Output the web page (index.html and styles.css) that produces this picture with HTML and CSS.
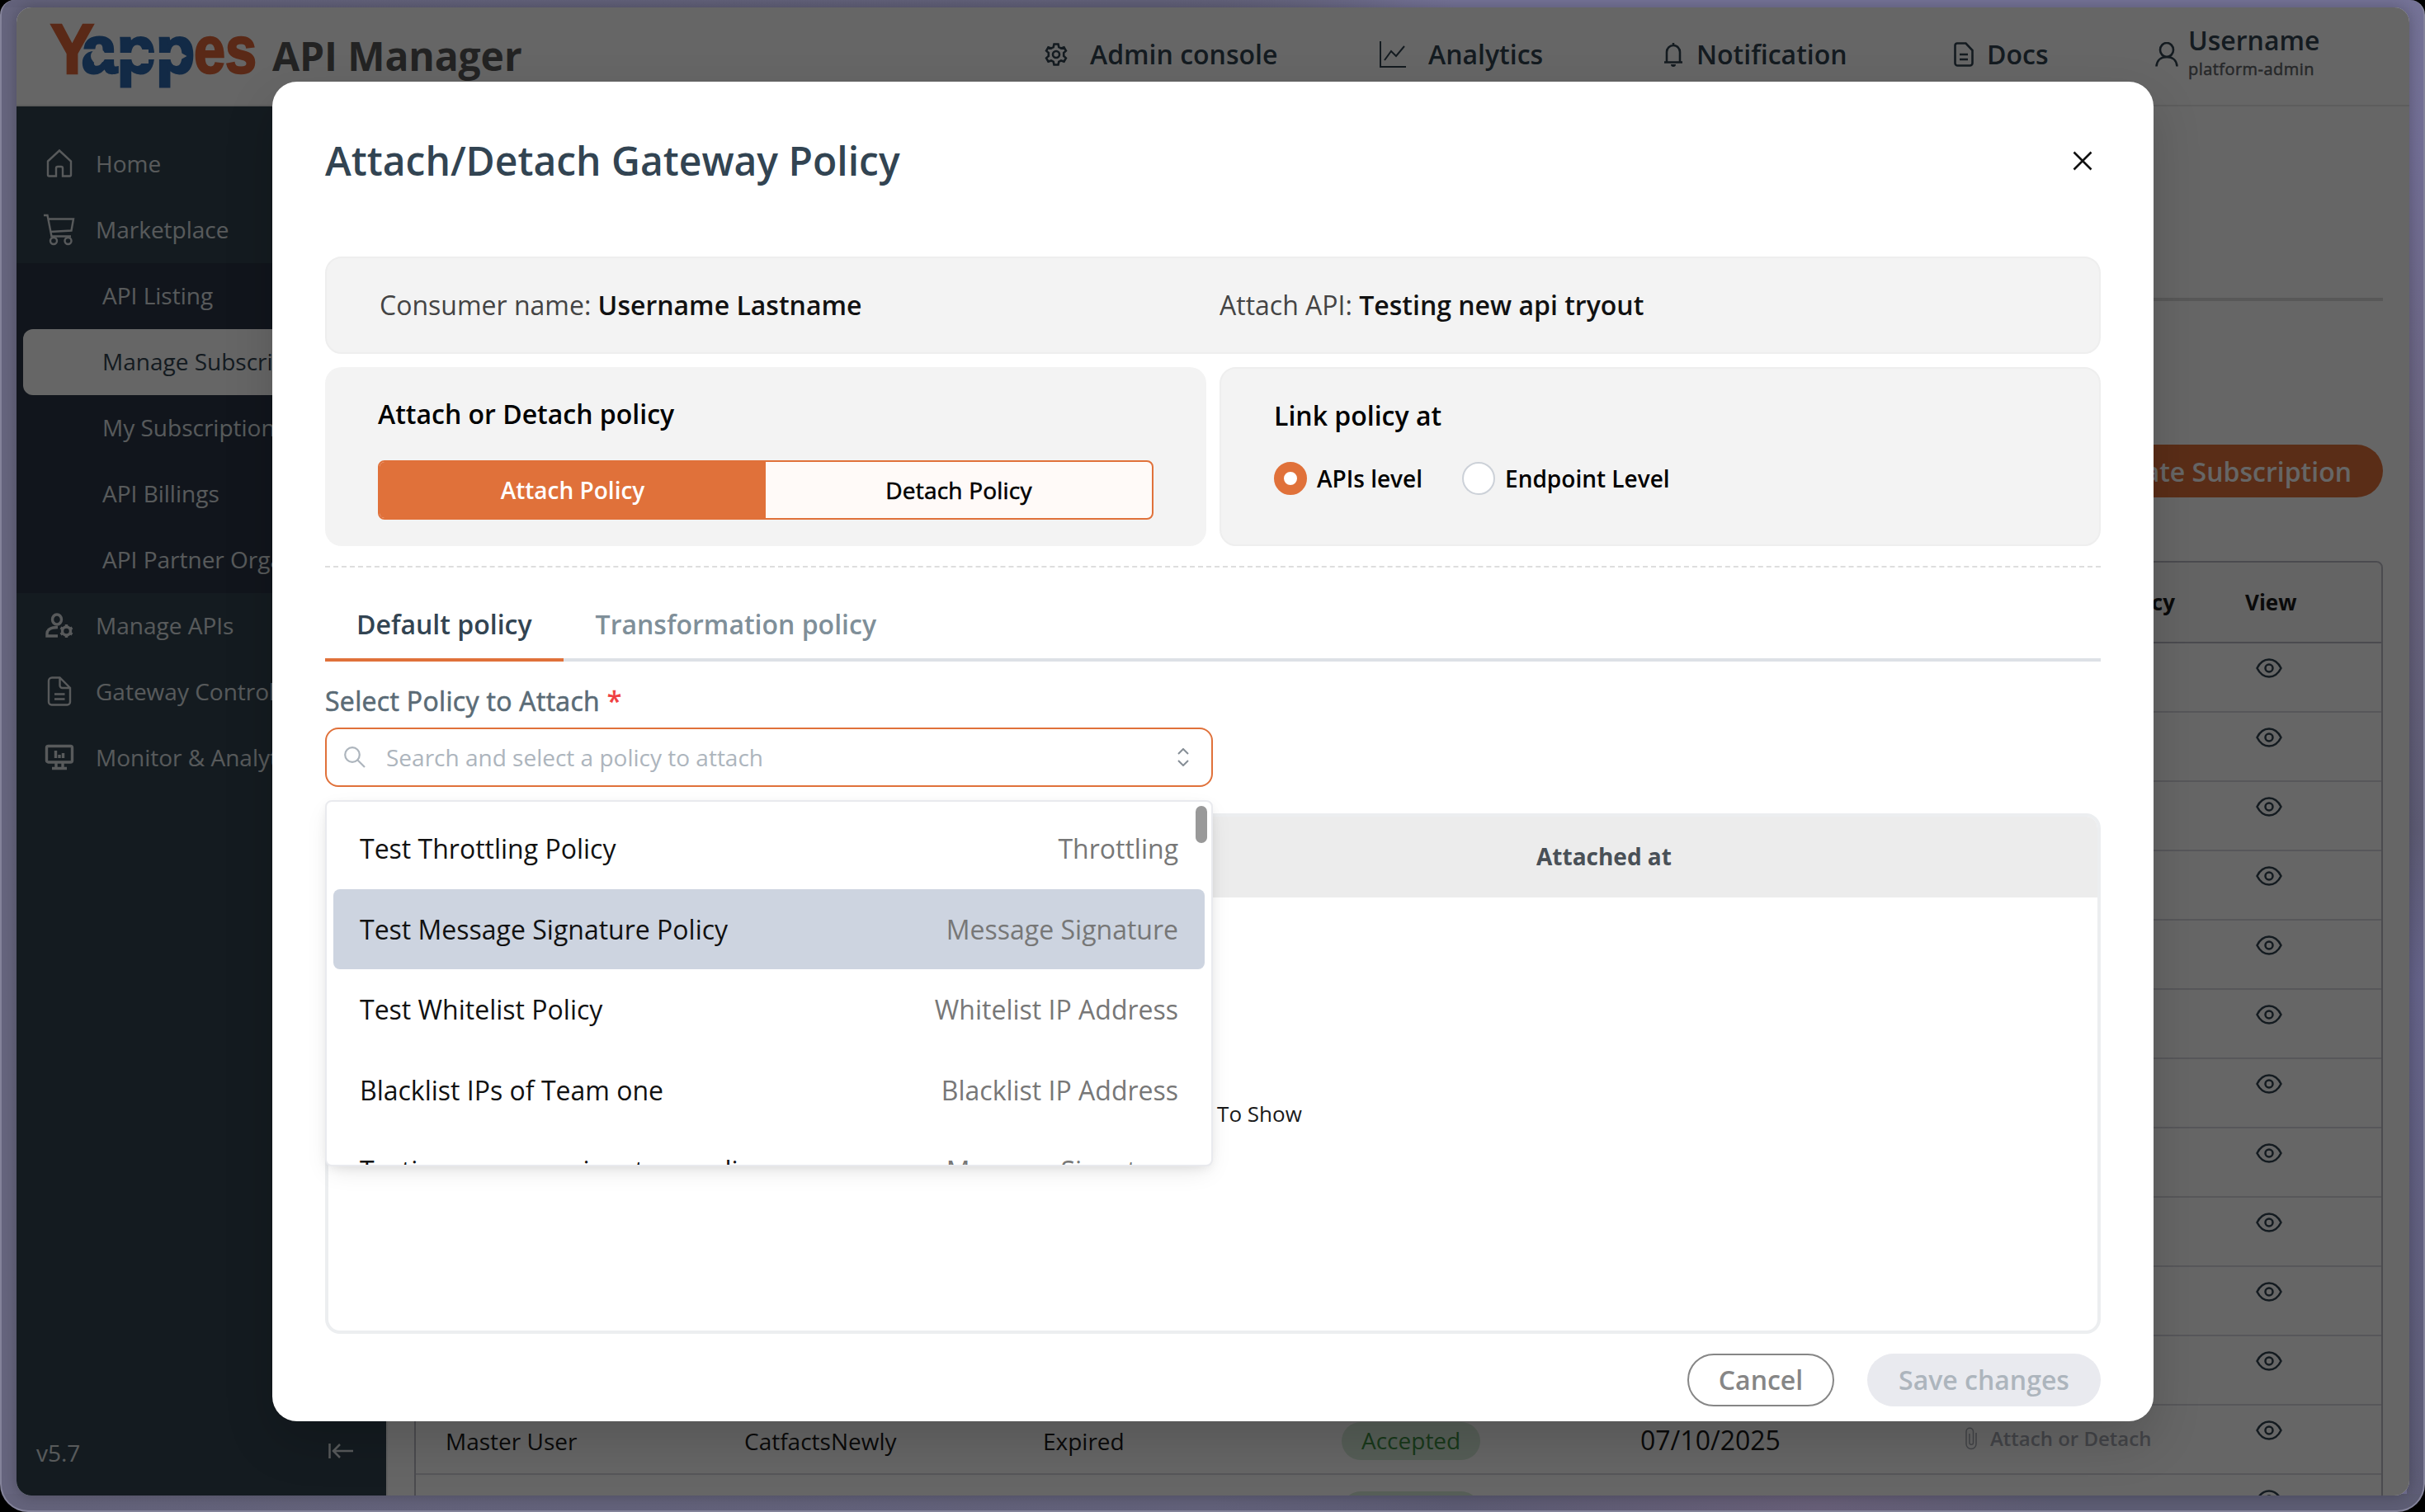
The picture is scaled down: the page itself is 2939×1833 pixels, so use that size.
FILE: index.html
```
<!DOCTYPE html>
<html lang="en">
<head>
  <meta charset="UTF-8" />
  <title>Yappes API Manager</title>
  <link rel="stylesheet" href="styles.css">
</head>
<body>
  <svg class="sprite">
    <symbol id="i-eye" viewBox="0 0 32 24">
      <path d="M1.5 12C5 5 10 1.5 16 1.5S27 5 30.500 12C27 19 22 22.500 16 22.500S5 19 1.500 12z" />
      <circle cx="16" cy="12" r="4.500" />
    </symbol>
    <symbol id="i-clip" viewBox="0 0 14 28">
      <path d="M1 8v12.500a6 6 0 0 0 12 0V7M1 8V5.500a4 4 0 0 1 8.500 0V19a2.300 2.300 0 0 1-4.600 0V8" />
    </symbol>
  </svg>

  <div class="frame">
    <div class="app">
      <header class="header">
        <svg class="logo" viewBox="0 0 280 100">
          <g class="logo-orange">
            <text x="11" y="68.500" font-size="85" textLength="53" lengthAdjust="spacingAndGlyphs">Y</text>
            <text x="185" y="68" font-size="79" textLength="76" lengthAdjust="spacingAndGlyphs">es</text>
          </g>
          <g class="logo-blue">
            <text x="49" y="68" font-size="79" textLength="137" lengthAdjust="spacingAndGlyphs">app</text>
          </g>
          <circle class="logo-cut" cx="69" cy="48" r="9" />
          <path class="logo-cut" d="M74 44H112V40H130V44H159V38L176.500 48L159 58V52H130V57H112V52H74z" />
        </svg>
        <div class="brand">API Manager</div>
        <nav class="topnav">
          <div class="nav-item nav-admin">
            <svg width="28" height="28" viewBox="0 0 28 28"><path d="M11.500 1.500h5l.8 3.600 2.700 1.500 3.500-1.200 2.400 4.200-2.700 2.500v3.800l2.700 2.500-2.400 4.200-3.500-1.200-2.700 1.500-.8 3.600h-5l-.8-3.600L8 21.400l-3.500 1.200-2.400-4.200 2.700-2.500v-3.800L2.100 9.600l2.400-4.200L8 6.600l2.700-1.500z" /><circle cx="14" cy="14" r="4" /></svg>
            <span>Admin console</span>
          </div>
          <div class="nav-item nav-analytics">
            <svg class="thin" width="32" height="32" viewBox="0 0 32 32"><path d="M1 0v31h31M6 23l8-11 6 6L30 6" /></svg>
            <span>Analytics</span>
          </div>
          <div class="nav-item">
            <svg width="24" height="30" viewBox="0 0 24 30"><path d="M12 1v3M4 24V12a8 8 0 0 1 16 0v12M1 24.500h22" /><path class="solid" d="M9 27h6a3 3 0 0 1-6 0z" /></svg>
            <span>Notification</span>
          </div>
          <div class="nav-item">
            <svg width="24" height="30" viewBox="0 0 24 30"><path d="M4 1.500h10.500L22.500 10v15.500a3 3 0 0 1-3 3H4.500a3 3 0 0 1-3-3V4a2.500 2.500 0 0 1 2.500-2.500zM7 15h10M7 21h10" /></svg>
            <span>Docs</span>
          </div>
          <div class="nav-item nav-user">
            <svg width="28" height="30" viewBox="0 0 28 30"><ellipse cx="14" cy="9.500" rx="8" ry="8.500" /><path d="M1.500 29.500c.5-7 5-11.500 12.500-11.500s12 4.500 12.500 11.500" /></svg>
            <div class="user">
              <div class="user-name">Username</div>
              <div class="user-role">platform-admin</div>
            </div>
          </div>
        </nav>
      </header>

      <div class="body">
        <aside class="sidebar">
          <div class="side-item">
            <svg viewBox="0 0 40 40"><path d="M6 17.500L20 4.500l14 13V34a1.500 1.500 0 0 1-1.500 1.500H24V26a2 2 0 0 0-2-2h-4a2 2 0 0 0-2 2v9.500H7.500A1.500 1.500 0 0 1 6 34z" /></svg>
            <span>Home</span>
          </div>
          <div class="side-item">
            <svg viewBox="0 0 40 40"><path d="M1 3h4.500l5 25.500H34M6.500 7.500H37l-2.500 14-25.500 1.500" /><circle cx="13" cy="34" r="4" /><circle cx="30.500" cy="34" r="4" /></svg>
            <span>Marketplace</span>
          </div>
          <div class="submenu">
            <div class="sub-item">API Listing</div>
            <div class="sub-item active">Manage Subscriptions</div>
            <div class="sub-item">My Subscriptions</div>
            <div class="sub-item">API Billings</div>
            <div class="sub-item">API Partner Organisation</div>
          </div>
          <div class="side-item">
            <svg class="bold" viewBox="0 0 40 40"><ellipse cx="17" cy="13" rx="5.500" ry="6" /><path d="M18 33H5v-3c0-4.500 4.500-7.500 13-7.500" /><circle cx="28.500" cy="27" r="5" /><path d="M28.500 19v3M28.500 32v3M21.500 23l2.500 1.500M33 29.500l2.500 1.500M21.500 31l2.500-1.500M33 24.500l2.500-1.500" /></svg>
            <span>Manage APIs</span>
          </div>
          <div class="side-item">
            <svg viewBox="0 0 40 40"><path d="M11 3.500h9.500L33 16v17a3.500 3.500 0 0 1-3.500 3.500h-19A3.500 3.500 0 0 1 7 33V7.500a4 4 0 0 1 4-4zM20.500 3.500V13a3 3 0 0 0 3 3H33M14 23.500h12.500M14 29.500h12.500" /></svg>
            <span>Gateway Controls</span>
          </div>
          <div class="side-item">
            <svg class="bold" viewBox="0 0 40 40"><rect x="4.500" y="6.500" width="31" height="19.500" rx="2" /><path d="M15.500 12v9M20 17v4M24.500 15v6M16 26v7M24 26v7M11 33.500h18" /></svg>
            <span>Monitor &amp; Analytics</span>
          </div>
          <div class="side-foot">
            <span>v5.7</span>
            <svg viewBox="0 0 30 18"><path d="M1.500 0v18M6 9h24M14 1L6 9l8 8" /></svg>
          </div>
        </aside>

        <main class="main">
          <div class="page-head"></div>
          <div class="toolbar">
            <button class="create-btn">Create Subscription</button>
          </div>
          <div class="grid">
            <div class="grid-head">
              <div class="head-policy">Policy</div>
              <div class="head-view">View</div>
            </div>
            <div id="rows"></div>
          </div>
        </main>
      </div>

      <div class="overlay">
        <div class="modal">
          <div class="modal-head">
            <h1>Attach/Detach Gateway Policy</h1>
            <svg class="close" viewBox="0 0 24 24"><path d="M1.500 1.500l21 21M22.500 1.500l-21 21" /></svg>
          </div>

          <div class="info">
            <div>Consumer name: <b>Username Lastname</b></div>
            <div>Attach API: <b>Testing new api tryout</b></div>
          </div>

          <div class="options">
            <div class="option">
              <h2>Attach or Detach policy</h2>
              <div class="toggle">
                <div class="toggle-on">Attach Policy</div>
                <div class="toggle-off">Detach Policy</div>
              </div>
            </div>
            <div class="option option-link">
              <h2>Link policy at</h2>
              <div class="radios">
                <label><i class="radio checked"></i>APIs level</label>
                <label><i class="radio"></i>Endpoint Level</label>
              </div>
            </div>
          </div>

          <div class="tabs">
            <div class="tab tab-active">Default policy</div>
            <div class="tab">Transformation policy</div>
          </div>

          <div class="label">Select Policy to Attach <em>*</em></div>
          <div class="select">
            <svg class="search" viewBox="0 0 26 26"><circle cx="10" cy="10" r="8.800" /><path d="M16 16l9 9" /></svg>
            <span>Search and select a policy to attach</span>
            <svg class="chevrons" viewBox="0 0 14 22"><path d="M1 7l6-6 6 6M1 15l6 6 6-6" /></svg>
            <div class="dropdown">
              <div class="policy"><span>Test Throttling Policy</span><span class="type">Throttling</span></div>
              <div class="policy hover"><span>Test Message Signature Policy</span><span class="type">Message Signature</span></div>
              <div class="policy"><span>Test Whitelist Policy</span><span class="type">Whitelist IP Address</span></div>
              <div class="policy"><span>Blacklist IPs of Team one</span><span class="type">Blacklist IP Address</span></div>
              <div class="policy"><span>Testing message signature policy</span><span class="type">Message Signature</span></div>
              <div class="scrollbar"></div>
            </div>
          </div>

          <div class="attached">
            <div class="attached-head">Attached at</div>
            <div class="attached-body">No Rows To Show</div>
          </div>

          <div class="modal-foot">
            <button class="btn-cancel">Cancel</button>
            <button class="btn-save" disabled>Save changes</button>
          </div>
        </div>
      </div>
    </div>
  </div>

  <script>
    const eye = '<svg class="eye"><use href="#i-eye"></use></svg>'
    const rows = new Array(11).fill({})
    rows.push({
      user: 'Master User',
      api: 'CatfactsNewly',
      plan: 'Expired',
      status: 'Accepted',
      date: '07/10/2025',
      policy: '<svg class="clip"><use href="#i-clip"></use></svg>Attach or Detach'
    })
    rows.push({ status: '&nbsp;' })

    document.getElementById('rows').innerHTML = rows.map(r => `
      <div class="row">
        <div>${r.user || ''}</div>
        <div>${r.api || ''}</div>
        <div>${r.plan || ''}</div>
        <div>${r.status ? `<span class="pill">${r.status}</span>` : ''}</div>
        <div class="date">${r.date || ''}</div>
        <div class="attach">${r.policy || ''}</div>
        <div class="view">${eye}</div>
      </div>
    `).join('')
  </script>
</body>
</html>
```
FILE: styles.css
```
* {
  box-sizing: border-box;
}
body {
  margin: 0;
  background: #000;
  font-family: "Open Sans", "Noto Sans", sans-serif;
  font-size: 28px;
  color: #1a1a1a;
  overflow: hidden;
}
h1, h2 {
  margin: 0;
}
svg {
  flex: none;
  fill: none;
  stroke: currentColor;
}
button {
  font-family: inherit;
  border: none;
}
.sprite {
  display: none;
}

/* window frame */
.frame {
  width: 2939px;
  height: 1833px;
  padding: 9px 17px 18px 18px;
  border: 2px solid #84839a;
  border-top: none;
  border-radius: 18px 18px 34px 34px;
  background:
    linear-gradient(to right, #63627b 0, #62617a 1400px, transparent 1700px) top / 100% 9px no-repeat,
    linear-gradient(to right, #64637b 0, #62617a 50%, #5c5b73 60%, #675f78 75%, #5d5d74 85%) bottom / 100% 20px no-repeat,
    linear-gradient(to bottom, transparent 0, #736f96 10%, #6a6480 30%, #5e5c75 55%, #65638a 65%, #5e5d76 100%) right / 20px 100% no-repeat,
    linear-gradient(to right, #66657e 0, #64637c 50%, #757397 60%);
}
.app {
  position: relative;
  width: 2900px;
  height: 1804px;
  border-radius: 18px;
  overflow: hidden;
  background: #fff;
  box-shadow: 0 0 18px rgba(0, 0, 0, 0.25);
}

/* top bar */
.header {
  display: flex;
  align-items: center;
  height: 120px;
  padding: 0 0 4px 30px;
  border-bottom: 2px solid #e8e8e8;
  color: #324452;
}
.logo {
  width: 280px;
  height: 100px;
  margin-top: 8px;
  font-family: "Liberation Sans", sans-serif;
  font-weight: bold;
  overflow: visible;
}
.logo-orange {
  fill: #e1683a;
  stroke: #e1683a;
  stroke-width: 2.5;
}
.logo-blue {
  fill: #2f69ae;
  stroke: #2f69ae;
  stroke-width: 3;
}
.logo-cut {
  fill: #fff;
  stroke: none;
}
.brand {
  width: 936px;
  margin-top: 3px;
  font-size: 48px;
  font-weight: 700;
  letter-spacing: -0.1px;
  color: #595959;
}
.topnav {
  display: grid;
  grid-template-columns: 406px 344px 352px 244px 290px;
  align-items: center;
  font-size: 32px;
  font-weight: 600;
}
.nav-item {
  display: flex;
  align-items: center;
  gap: 16px;
  padding-bottom: 1px;
  stroke-width: 2.6;
}
.nav-admin {
  gap: 27px;
}
.nav-analytics {
  gap: 27px;
}
.nav-user {
  gap: 12px;
}
.thin {
  stroke-width: 2;
}
.solid {
  fill: currentColor;
  stroke: none;
}
.user {
  margin-top: -6px;
}
.user-name {
  line-height: 42px;
}
.user-role {
  font-size: 20px;
  font-weight: 400;
  letter-spacing: 0.45px;
  line-height: 28px;
  color: #5f6468;
  -webkit-text-stroke: 0.5px;
}

/* sidebar */
.body {
  display: flex;
  height: 1684px;
}
.sidebar {
  display: flex;
  flex-direction: column;
  width: 448px;
  padding-top: 30px;
  background: #324452;
  color: #dbe0e3;
}
.side-item {
  display: flex;
  align-items: center;
  gap: 24px;
  height: 80px;
  padding: 0 0 2px 32px;
  white-space: nowrap;
}
.side-item svg {
  width: 40px;
  height: 40px;
  stroke-width: 2.4;
}
.side-item .bold {
  stroke-width: 3.4;
}
.submenu {
  background: #2b3546;
}
.sub-item {
  height: 80px;
  padding-left: 104px;
  line-height: 79px;
  white-space: nowrap;
}
.sub-item.active {
  margin-left: 8px;
  padding-left: 96px;
  border-radius: 12px 0 0 12px;
  background: #fff;
  color: #324452;
}
.side-foot {
  display: flex;
  justify-content: space-between;
  align-items: center;
  margin-top: auto;
  padding: 0 40px 33px 24px;
}
.side-foot svg {
  width: 30px;
  height: 18px;
  margin-top: -4px;
  stroke-width: 2.5;
}

/* subscriptions page */
.main {
  flex: 1;
  padding: 0 32px;
  border-left: 2px solid #f0f0f0;
}
.page-head {
  height: 236px;
  border-bottom: 4px solid #dcdcdc;
}
.toolbar {
  display: flex;
  justify-content: flex-end;
  height: 315px;
  padding-top: 174px;
}
.create-btn {
  height: 64px;
  padding: 0 38px 0 40px;
  border-radius: 32px;
  background: #e1703a;
  color: #fff;
  font-size: 32px;
  font-weight: 600;
}
.grid {
  border: 2px solid #bcbcc6;
  border-radius: 8px;
}
.grid-head {
  display: flex;
  justify-content: flex-end;
  align-items: center;
  height: 98px;
  border-bottom: 2px solid #bcbcc6;
  background: #f9f9f9;
  font-size: 26px;
  font-weight: 700;
  border-radius: 8px 8px 0 0;
}
.head-view {
  width: 165px;
  margin-left: 85px;
}
.row {
  display: grid;
  grid-template-columns: repeat(5, 362px) 306px 266px;
  align-items: center;
  height: 84px;
  border-bottom: 2px solid #dadae2;
}
.row > div {
  padding: 4px 0 0 36px;
}
.row .date {
  padding-top: 0;
  font-size: 32px;
}
.pill {
  display: inline-block;
  height: 46px;
  min-width: 168px;
  padding: 0 24px;
  border-radius: 23px;
  line-height: 45px;
  background: #d7ebd9;
  color: #3f8f45;
}
.row .attach {
  display: flex;
  align-items: center;
  gap: 16px;
  padding: 0 0 3px 68px;
  font-size: 24px;
  font-weight: 600;
  color: #a7abb3;
  white-space: nowrap;
}
.clip {
  width: 14px;
  height: 28px;
  stroke-width: 1.5;
}
.row .view {
  display: flex;
  justify-content: center;
  padding: 0 6px 22px 0;
  color: #324452;
}
.eye {
  width: 32px;
  height: 24px;
  stroke-width: 2.5;
}

/* modal */
.overlay {
  position: absolute;
  inset: 0;
  display: flex;
  align-items: center;
  justify-content: center;
  background: rgba(0, 0, 0, 0.6);
}
.modal {
  width: 2280px;
  height: 1624px;
  padding: 0 64px;
  border-radius: 30px;
  background: #fff;
  box-shadow: 0 24px 60px rgba(0, 0, 0, 0.16);
}
.modal-head {
  display: flex;
  justify-content: space-between;
  align-items: center;
  height: 192px;
  padding-right: 10px;
}
h1 {
  padding-bottom: 2px;
  font-size: 48px;
  font-weight: 600;
  color: #324452;
}
.close {
  width: 24px;
  height: 24px;
  stroke-width: 2.6;
  color: #111;
}
.info {
  display: grid;
  grid-template-columns: 1018px 1fr;
  align-items: center;
  height: 118px;
  margin: 20px 0 16px;
  padding: 0 0 1px 64px;
  border: 2px solid #eee;
  border-radius: 20px;
  background: #f3f3f3;
  font-size: 32px;
  color: #444;
}
.info b {
  font-weight: 600;
  color: #111;
}
.options {
  display: grid;
  grid-template-columns: 1fr 1fr;
  gap: 16px;
}
.option {
  height: 217px;
  padding: 35px 64px;
  border-radius: 20px;
  background: #f3f3f3;
}
.option-link {
  border: 2px solid #eee;
}
h2 {
  font-size: 32px;
  font-weight: 600;
  line-height: 44px;
  color: #000;
}
.toggle {
  display: grid;
  grid-template-columns: 1fr 1fr;
  height: 72px;
  margin-top: 34px;
  border: 2px solid #e0713a;
  border-radius: 8px;
  overflow: hidden;
  background: #fffaf8;
  line-height: 69px;
  text-align: center;
}
.toggle-on {
  background: #e0713a;
  color: #fff;
  font-weight: 600;
}
.toggle-off {
  color: #000;
  letter-spacing: 0.2px;
  -webkit-text-stroke: 0.6px;
}
.radios {
  display: flex;
  gap: 48px;
  margin-top: 34px;
  font-weight: 600;
  color: #000;
}
.radios label {
  display: flex;
  align-items: center;
  gap: 12px;
  height: 40px;
}
.radio {
  width: 40px;
  height: 40px;
  border: 2px solid #ccd1d8;
  border-radius: 50%;
  background: #fff;
}
.radio.checked {
  border: 12px solid #e0713a;
}
.tabs {
  display: flex;
  height: 116px;
  margin-top: 24px;
  padding-top: 26px;
  border-top: 2px dashed #dedede;
  box-shadow: inset 0 -4px #dde1e6;
  font-size: 32px;
  font-weight: 600;
}
.tab {
  padding: 0 38px 0 39px;
  line-height: 86px;
  color: #7f8f99;
}
.tab-active {
  height: 88px;
  padding: 0 38px;
  border-bottom: 4px solid #e0713a;
  color: #324452;
}
.label {
  margin-top: 26px;
  font-size: 32px;
  letter-spacing: 0.32px;
  line-height: 44px;
  color: #5a6b76;
  -webkit-text-stroke: 0.6px;
}
.label em {
  font-style: normal;
  color: #f03e3e;
}
.select {
  position: relative;
  display: flex;
  align-items: center;
  width: 1076px;
  height: 72px;
  margin-top: 10px;
  padding: 0 27px 0 21px;
  border: 2px solid #e0713a;
  border-radius: 16px;
  color: #adb5bd;
}
.search {
  width: 26px;
  height: 26px;
  margin-right: 25px;
  stroke-width: 2.2;
}
.chevrons {
  width: 14px;
  height: 22px;
  margin-left: auto;
  stroke-width: 2;
  color: #868e96;
}
.dropdown {
  position: absolute;
  top: 86px;
  left: -2px;
  width: 1076px;
  height: 444px;
  padding: 8px;
  border: 2px solid #e9eaee;
  border-radius: 8px;
  background: #fff;
  box-shadow: 0 10px 30px -6px rgba(0, 0, 0, 0.1), 0 4px 14px -4px rgba(0, 0, 0, 0.1);
  overflow: hidden;
  font-size: 32px;
  color: #111;
}
.policy {
  display: flex;
  justify-content: space-between;
  padding: 24px 32px;
  border-radius: 8px;
  line-height: 49.6px;
}
.policy.hover {
  background: #cdd4e0;
}
.type {
  color: #777;
}
.scrollbar {
  position: absolute;
  top: 5px;
  right: 5px;
  width: 14px;
  height: 45px;
  border-radius: 7px;
  background: #999;
}
.attached {
  height: 631px;
  margin-top: 32px;
  border: 4px solid #eceef0;
  border-radius: 18px;
  overflow: hidden;
}
.attached-head {
  height: 98px;
  padding-left: 1464px;
  background: #ececec;
  font-weight: 700;
  line-height: 97px;
  color: #495057;
}
.attached-body {
  display: flex;
  align-items: center;
  justify-content: center;
  height: 523px;
  font-size: 26px;
}
.modal-foot {
  display: flex;
  justify-content: flex-end;
  gap: 40px;
  margin-top: 24px;
}
.modal-foot button {
  height: 64px;
  padding-bottom: 2px;
  border-radius: 32px;
  font-size: 32px;
  font-weight: 600;
}
.btn-cancel {
  width: 178px;
  border: 2px solid #868686;
  background: #fff;
  color: #868686;
}
.btn-save {
  width: 283px;
  background: #e9eaef;
  color: #adb5bd;
}
```
